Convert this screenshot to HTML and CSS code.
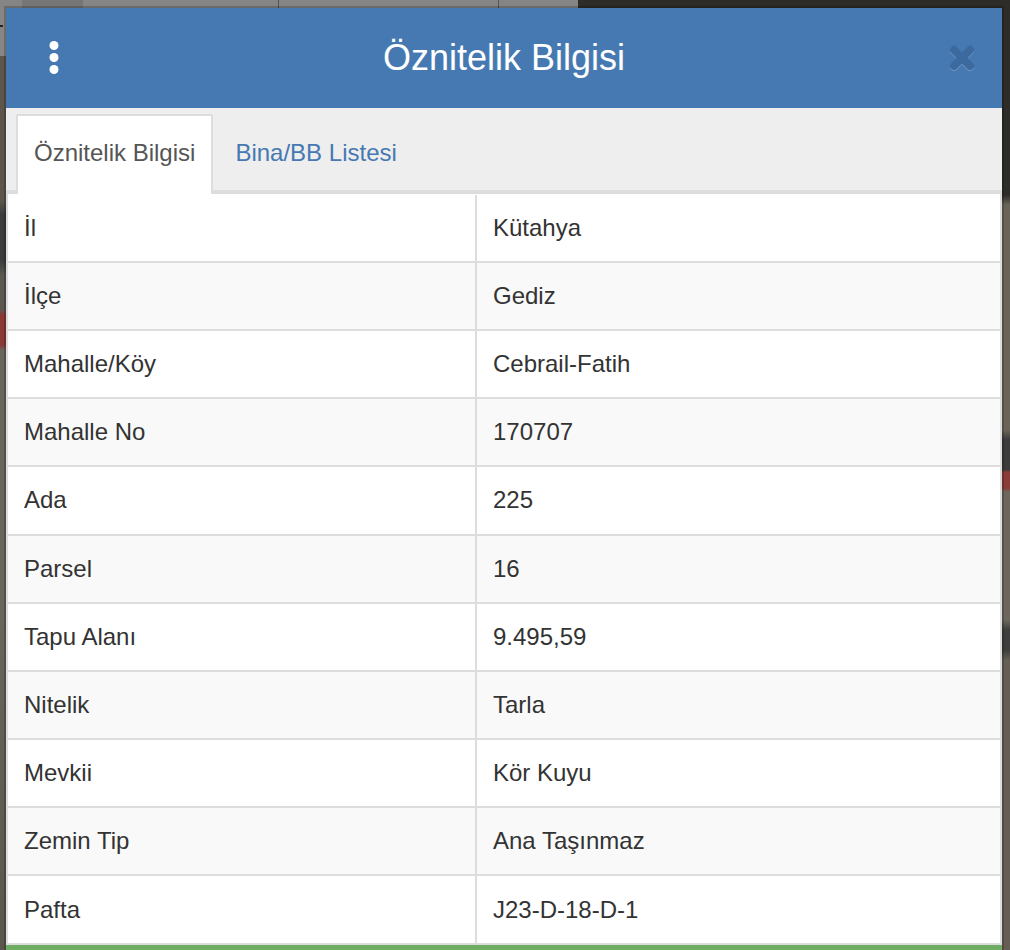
FILE: index.html
```html
<!DOCTYPE html>
<html lang="en">
<head>
  <meta charset="UTF-8">
  <title>Öznitelik Bilgisi</title>
  <link rel="stylesheet" href="styles.css">
</head>
<body>
<div class="panel">
  <header class="panel-header">
    <button class="menu-btn" aria-label="Menü">
      <svg width="12" height="36" viewBox="0 0 12 36"><circle cx="6" cy="5.5" r="4.5"/><circle cx="6" cy="17.5" r="4.5"/><circle cx="6" cy="29.5" r="4.5"/></svg>
    </button>
    <h1 class="panel-title">Öznitelik Bilgisi</h1>
    <button class="close-btn" aria-label="Kapat">
      <svg width="26" height="26" viewBox="0 0 26 26"><path d="M5 5 21 21M21 5 5 21"/></svg>
    </button>
  </header>
  <nav class="tabs">
    <a class="tab active" href="#">Öznitelik Bilgisi</a>
    <a class="tab" href="#">Bina/BB Listesi</a>
  </nav>
  <div class="attr-table">
    <div class="attr-row"><div class="attr-cell">İl</div><div class="attr-cell">Kütahya</div></div>
    <div class="attr-row"><div class="attr-cell">İlçe</div><div class="attr-cell">Gediz</div></div>
    <div class="attr-row"><div class="attr-cell">Mahalle/Köy</div><div class="attr-cell">Cebrail-Fatih</div></div>
    <div class="attr-row"><div class="attr-cell">Mahalle No</div><div class="attr-cell">170707</div></div>
    <div class="attr-row"><div class="attr-cell">Ada</div><div class="attr-cell">225</div></div>
    <div class="attr-row"><div class="attr-cell">Parsel</div><div class="attr-cell">16</div></div>
    <div class="attr-row"><div class="attr-cell">Tapu Alanı</div><div class="attr-cell">9.495,59</div></div>
    <div class="attr-row"><div class="attr-cell">Nitelik</div><div class="attr-cell">Tarla</div></div>
    <div class="attr-row"><div class="attr-cell">Mevkii</div><div class="attr-cell">Kör Kuyu</div></div>
    <div class="attr-row"><div class="attr-cell">Zemin Tip</div><div class="attr-cell">Ana Taşınmaz</div></div>
    <div class="attr-row"><div class="attr-cell">Pafta</div><div class="attr-cell">J23-D-18-D-1</div></div>
  </div>
  <div class="panel-footer"></div>
</div>
</body>
</html>
```

FILE: styles.css
```css
html, body {
  height: 100%;
}
body {
  margin: 0;
  overflow: hidden;
  font-family: "Liberation Sans", Arial, sans-serif;
  background-color: #2e2c28;
  /* map showing around the panel: arrow, top tiles, left and right edges */
  background-image:
    linear-gradient(#222, #222),
    linear-gradient(to right, #858585 0, #858585 22px, #767676 22px, #767676 83px, #858585 83px, #858585 278px, #555 278px, #555 279px, #858585 279px, #858585 498px, #555 498px, #555 499px, #858585 499px, #858585 578px, transparent 578px),
    linear-gradient(to bottom, #868686 0, #868686 56px, #5d574b 56px, #5d574b 200px, #3a3c3e 215px, #3a3c3e 260px, #5c5750 275px, #5c5750 310px, #8a3a35 315px, #8a3a35 345px, #6a665e 350px, #6a665e 600px, #5a564e 950px),
    linear-gradient(to bottom, #2e2c28 0, #2e2c28 195px, #6a6458 205px, #6a6458 430px, #3a3a3a 440px, #3a3a3a 470px, #8a3c38 472px, #8a3c38 488px, #6c665c 492px, #6c665c 620px, #3e3e3e 630px, #3e3e3e 650px, #645e54 660px, #645e54 950px);
  background-size: 3px 2px, 100% 8px, 6px 100%, 8px 100%;
  background-position: 0 25px, 0 0, 0 0, 100% 0;
  background-repeat: no-repeat;
}
.panel {
  margin: 8px 8px 0 6px;
  height: 942px;
  display: flex;
  flex-direction: column;
  background: #fff;
  box-shadow: 0 0 0 2px rgba(0, 0, 0, .2);
}
.panel-header {
  height: 100px;
  flex: none;
  display: flex;
  align-items: center;
  background: #4679b2;
  color: #fff;
}
.menu-btn, .close-btn {
  padding: 0;
  border: none;
  background: none;
  display: flex;
  cursor: pointer;
}
.menu-btn {
  margin-left: 42px;
  width: 12px;
}
.menu-btn svg {
  fill: #fff;
}
.panel-title {
  flex: 1;
  margin: 0;
  padding-right: 1px;
  text-align: center;
  font-size: 36px;
  font-weight: 400;
  line-height: 40px;
}
.close-btn {
  margin-right: 27px;
}
.close-btn svg {
  fill: none;
  stroke: #3d6a9e;
  stroke-width: 8;
  stroke-linecap: round;
  filter: drop-shadow(0 1px 0 #6e97c4);
}
.tabs {
  height: 82px;
  flex: none;
  display: flex;
  align-items: flex-end;
  padding-left: 10px;
  background: #eee;
  border-bottom: 4px solid #ddd;
}
.tab {
  box-sizing: border-box;
  height: 80px;
  margin-bottom: -4px;
  padding: 0 16px 4px;
  display: flex;
  align-items: center;
  font-size: 24px;
  color: #4679b2;
  text-decoration: none;
  border: 2px solid transparent;
  border-bottom: none;
  border-radius: 2px 2px 0 0;
}
.tab + .tab {
  margin-left: 4px;
}
.tab.active {
  color: #555;
  background: #fff;
  border-color: #ddd;
}
.attr-table {
  flex: 1;
  padding-top: .6px;
  border: solid #ddd;
  border-width: 0 2px;
  min-height: 0;
}
.attr-row {
  height: 68.2px;
  box-sizing: border-box;
  display: grid;
  grid-template-columns: 467px 1fr;
  border-bottom: 2px solid #ddd;
  font-size: 24px;
  color: #333;
}
.attr-row:nth-child(even) {
  background: #f9f9f9;
}
.attr-cell {
  display: flex;
  align-items: center;
  padding: 0 16px;
}
.attr-cell + .attr-cell {
  border-left: 2px solid #ddd;
}
.panel-footer {
  height: 5px;
  flex: none;
  background: #6fae62;
}
```
